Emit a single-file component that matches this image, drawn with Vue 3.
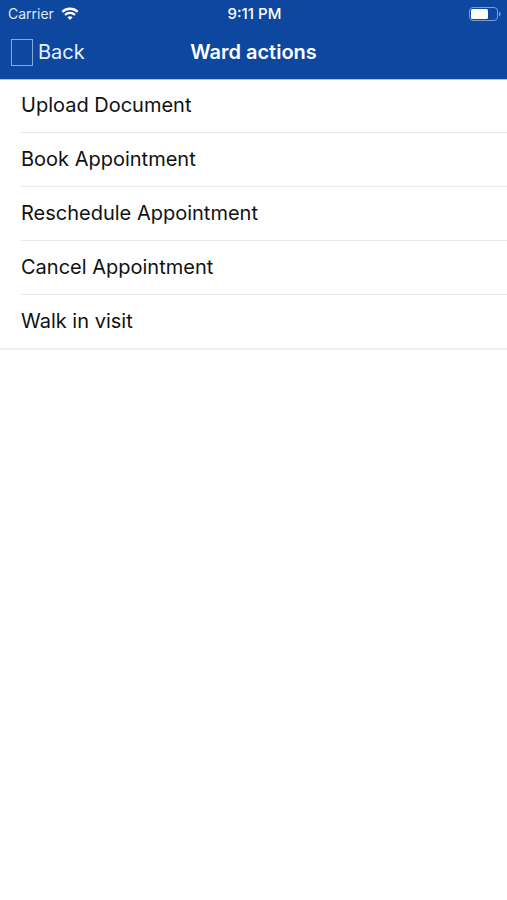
<template>
  <div class="screen">
    <header class="header">
      <div class="status-bar">
        <div class="carrier">
          <span>Carrier</span>
          <svg class="wifi" viewBox="0 0 18 14" aria-hidden="true">
            <path d="M1.3 4.9a11 11 0 0 1 15.4 0M4 8a7 7 0 0 1 10 0" fill="none" stroke="#fff" stroke-width="2.3" />
            <path d="M9 13 6.4 10.3a3.9 3.9 0 0 1 5.2 0z" fill="#fff" />
          </svg>
        </div>
        <span class="time">9:11 PM</span>
        <svg class="battery" viewBox="0 0 32 14" aria-hidden="true">
          <rect x="0.5" y="0.5" width="28" height="13" rx="3.5" fill="none" stroke="#7c9dd3" />
          <rect x="2" y="2" width="17" height="10" rx="1.5" fill="#fff" />
          <path d="M30 4.5a2.7 2.7 0 0 1 0 5z" fill="#7c9dd3" />
        </svg>
      </div>
      <nav class="nav-bar">
        <button class="btn-back" type="button">
          <span class="back-icon"></span>
          <span>Back</span>
        </button>
        <h1 class="title">Ward actions</h1>
      </nav>
    </header>
    <ul class="action-list">
      <li v-for="action in actions" :key="action" class="action-item">
        <button class="action-btn" type="button">{{ action }}</button>
      </li>
    </ul>
  </div>
</template>

<script setup>
const actions = [
  'Upload Document',
  'Book Appointment',
  'Reschedule Appointment',
  'Cancel Appointment',
  'Walk in visit'
]
</script>

<style>
body {
  margin: 0;
  background: #fff;
}
</style>

<style scoped>
.screen {
  min-height: 100vh;
  background: #fff;
  color: #111;
  font-family: Inter, "Liberation Sans", sans-serif;
}

.header {
  background: #0d479f;
  box-shadow: 0 1px 0 #a9c3ea;
  color: #fff;
}

.status-bar {
  display: grid;
  grid-template-columns: 1fr auto 1fr;
  align-items: center;
  height: 27px;
  padding: 0 6px 0 8px;
  font-size: 14px;
}

.carrier {
  display: flex;
  align-items: center;
  gap: 7px;
  color: #dfe8f6;
}

.wifi {
  width: 18px;
  height: 14px;
}

.time {
  font-size: 15px;
  font-weight: 500;
}

.battery {
  width: 32px;
  height: 14px;
  justify-self: end;
}

.nav-bar {
  display: grid;
  grid-template-columns: 1fr auto 1fr;
  align-items: center;
  height: 50px;
  padding: 0 11px 2px;
}

.btn-back {
  display: flex;
  align-items: center;
  justify-self: start;
  gap: 5px;
  padding: 0;
  border: none;
  background: none;
  color: #e8effa;
  font-family: inherit;
  font-size: 20px;
  cursor: pointer;
}

.back-icon {
  box-sizing: border-box;
  width: 22px;
  height: 27px;
  border: 1px solid #86a8dc;
}

.title {
  margin: 0;
  font-size: 20px;
  font-weight: 600;
}

.action-list {
  margin: 0;
  padding: 0;
  list-style: none;
  border-bottom: 2px solid #efeff0;
}

.action-item {
  margin-left: 21px;
}

.action-item + .action-item {
  border-top: 1px solid #e8e8ea;
}

.action-btn {
  display: block;
  width: 100%;
  height: 53px;
  padding: 0 0 2px;
  border: none;
  background: none;
  color: inherit;
  font-family: inherit;
  font-size: 20px;
  text-align: left;
  cursor: pointer;
}
</style>
